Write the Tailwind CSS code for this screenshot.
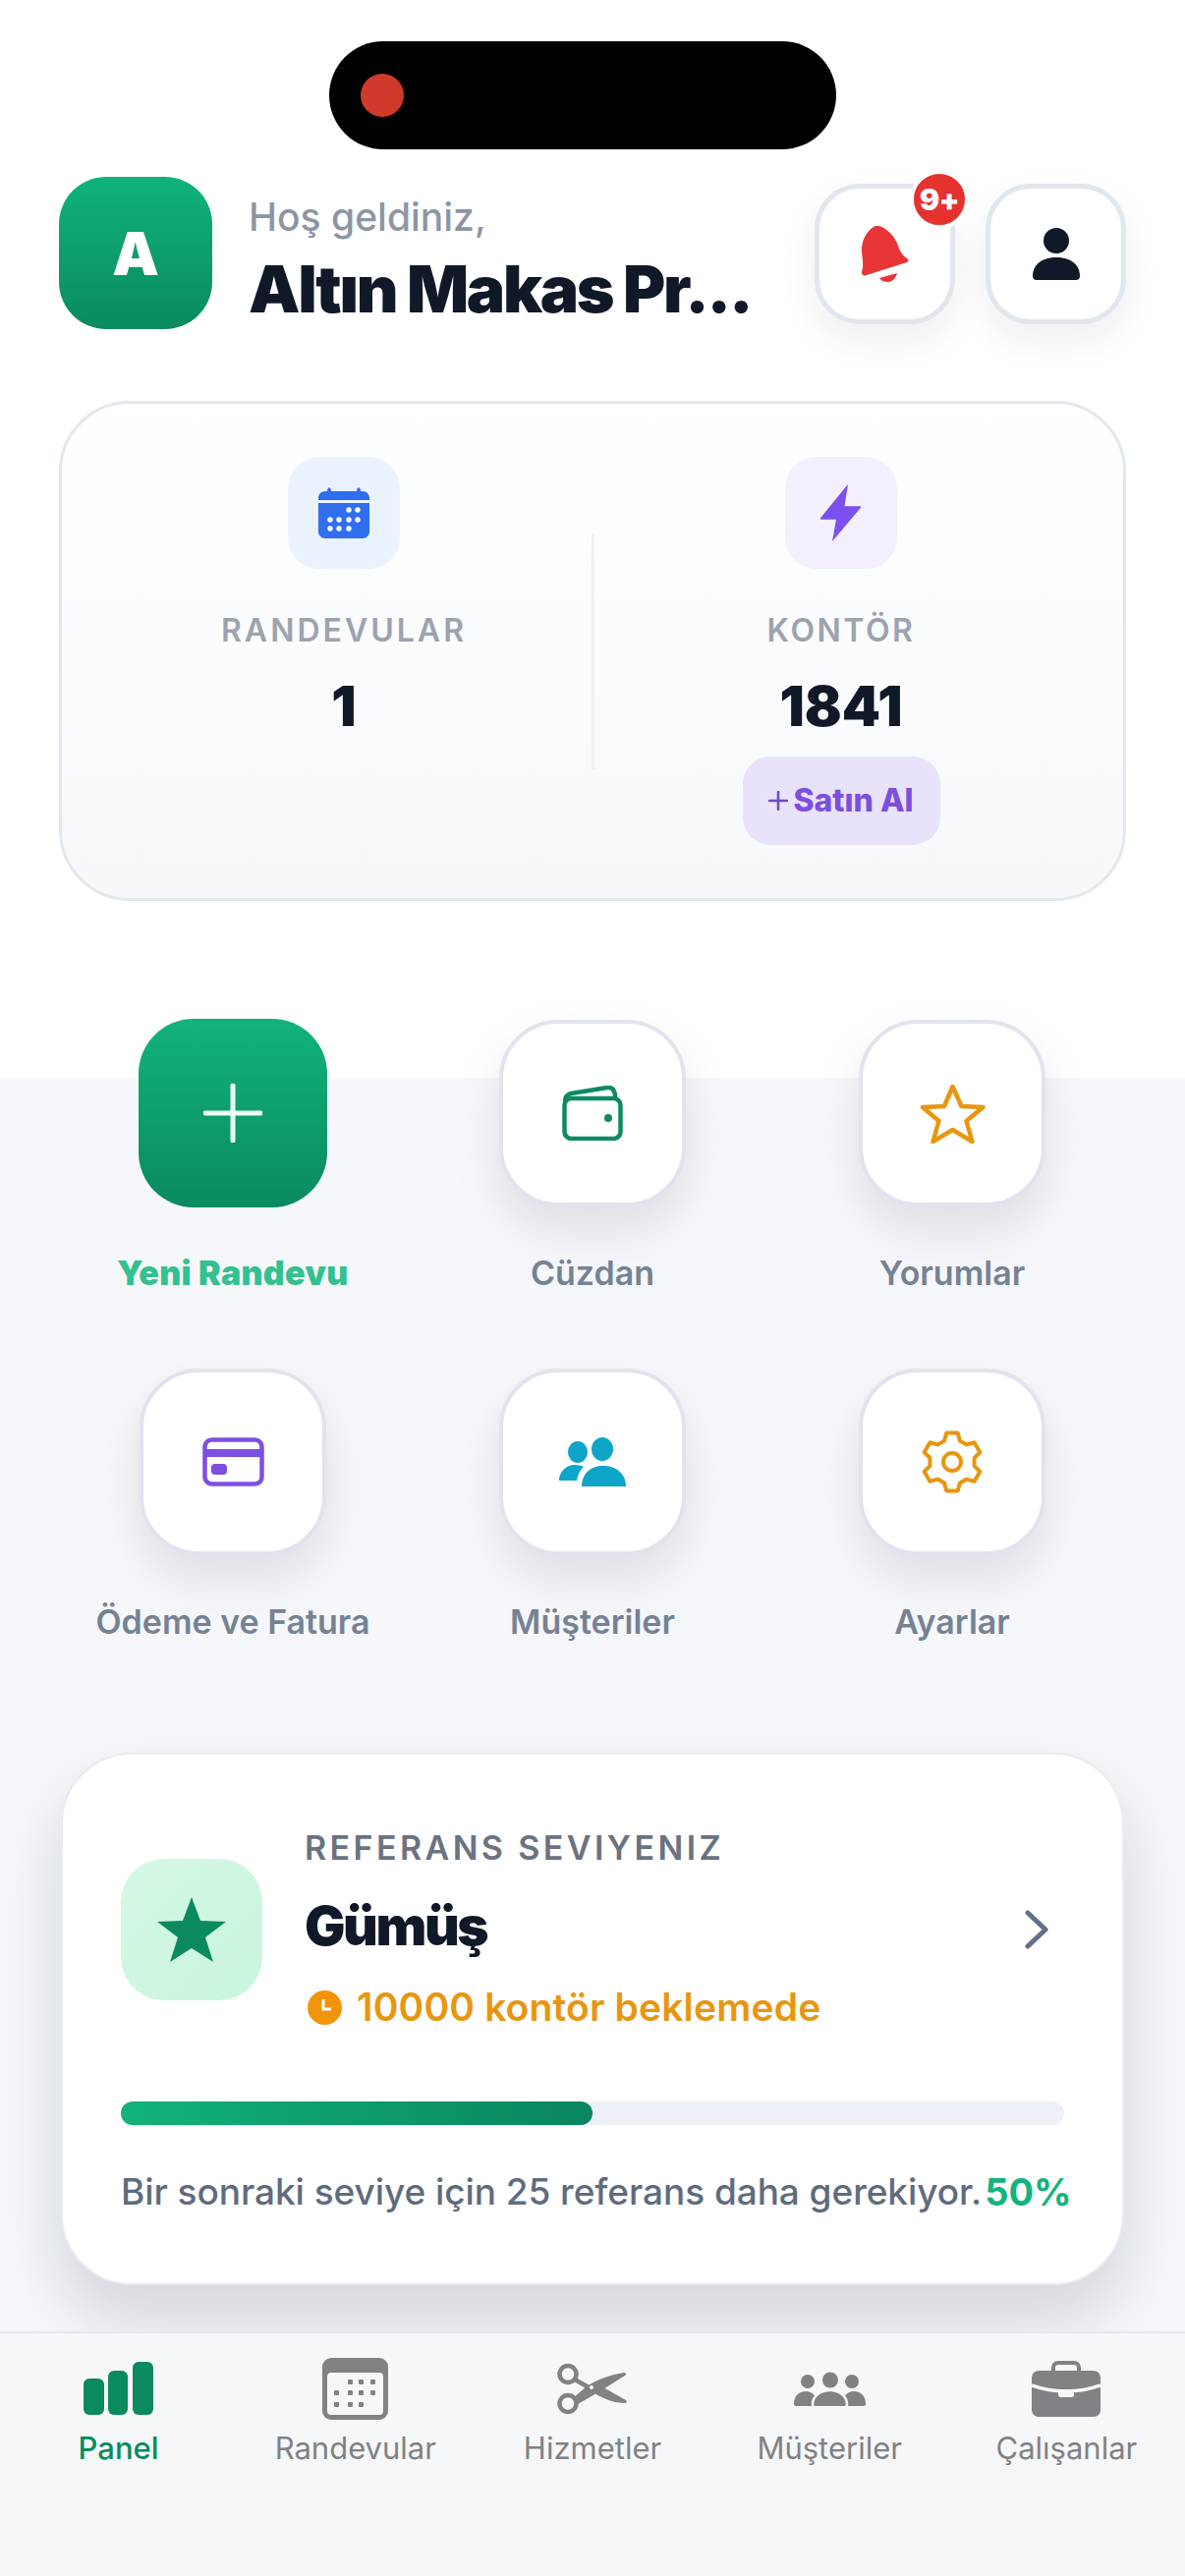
<!DOCTYPE html>
<html lang="en">
<head>
    <meta charset="UTF-8">
    <meta name="viewport" content="width=device-width, initial-scale=1.0">
    <title>Panel</title>
    <script src="https://cdn.jsdelivr.net/npm/@tailwindcss/browser@4"></script>
</head>
<body class="w-[1206px] h-[2622px] overflow-hidden flex flex-col bg-[linear-gradient(#ffffff_1097px,#f5f7fa_1097px)] font-['Inter',sans-serif] text-[#111827]">
    <!-- Status bar island -->
    <div class="h-[180px] shrink-0 pt-[42px] pr-[20px] flex justify-center">
        <div class="w-[516px] h-[110px] rounded-full bg-black flex items-center pl-[32px]">
            <div class="w-[44px] h-[44px] rounded-full bg-[#cf3a2b]"></div>
        </div>
    </div>

    <!-- Header -->
    <header class="h-[155px] shrink-0 px-[60px] flex items-start">
        <div class="w-[156px] h-[155px] rounded-[48px] bg-gradient-to-b from-[#10b37a] to-[#0a8a60] flex items-center justify-center text-white text-[60px] font-black">A</div>
        <div class="ml-[37px] w-[530px] pt-[16px]">
            <div class="text-[39px] leading-[50px] text-[#8d95a3] font-medium">Hoş geldiniz,</div>
            <div class="mt-[10px] text-[66px] leading-[76px] font-black tracking-[-2.3px] whitespace-nowrap">Altın Makas Pr...</div>
        </div>
        <div class="ml-auto mt-[7px] flex gap-[31px]">
            <button class="relative w-[143px] h-[143px] rounded-[46px] bg-white border-[5px] border-[#e2e6ee] flex items-center justify-center shadow-[0_16px_36px_rgba(15,23,42,0.07)]">
                <svg class="w-[48px] h-[57px]" viewBox="0 0 48 57"><path fill="#e93535" d="M12 1C15-1 20 0 24 3c7 5 11 11 13 17 2 7 5 10 9 13 2 1 2 3 0 4L5 50c-3 1-5 0-5-3 2-7 1-12 0-20C-1 17 4 6 12 1z"/><path fill="#e93535" d="M18 53l18-5c-1 5-5 9-9 9-4 0-7-1-9-4z"/></svg>
                <span class="absolute left-[92px] top-[-19px] w-[60px] h-[60px] rounded-full bg-[#e5322f] border-[4px] border-white flex items-center justify-center text-white text-[30px] font-black tracking-[-0.5px]">9+</span>
            </button>
            <button class="w-[143px] h-[143px] rounded-[46px] bg-white border-[5px] border-[#e2e6ee] flex items-center justify-center shadow-[0_16px_36px_rgba(15,23,42,0.07)]">
                <svg class="w-[48px] h-[53px]" viewBox="0 0 48 53"><circle cx="24" cy="13" r="13" fill="#111827"/><path fill="#111827" d="M0 49c0-12 10-19 24-19s24 7 24 19c0 2-1 4-4 4H4c-3 0-4-2-4-4z"/></svg>
            </button>
        </div>
    </header>

    <main class="px-[60px] pt-[73px] flex-1 flex flex-col">
        <!-- Stats card -->
        <section class="h-[509px] w-[1086px] shrink-0 rounded-[72px] border-[3px] border-[#e2e8ee] bg-gradient-to-b from-white to-[#f6f8fa] px-[34px] grid grid-cols-2 relative">
            <div class="absolute left-[539px] top-[132px] w-[3px] h-[240px] bg-[#eef1f5]"></div>
            <div class="flex flex-col items-center pt-[54px]">
                <div class="w-[114px] h-[114px] rounded-[32px] bg-[#eaf2fe] flex items-center justify-center">
                    <svg class="w-[52px] h-[52px]" viewBox="0 0 52 52"><path fill="#2f6fed" d="M9 4c0-5 4-5 4 0h26c0-5 4-5 4 0h2c4 0 7 3 7 7v2H0v-2c0-4 3-7 7-7h2z"/><path fill="#2f6fed" d="M0 16h52v29c0 4-3 7-7 7H7c-4 0-7-3-7-7V16z"/><g fill="#fff"><circle cx="31" cy="23" r="2.700"/><circle cx="40" cy="23" r="2.700"/><circle cx="12" cy="33" r="2.700"/><circle cx="21" cy="33" r="2.700"/><circle cx="31" cy="33" r="2.700"/><circle cx="40" cy="33" r="2.700"/><circle cx="12" cy="42" r="2.700"/><circle cx="21" cy="42" r="2.700"/><circle cx="31" cy="42" r="2.700"/></g></svg>
                </div>
                <div class="mt-[43px] text-[32px] leading-[40px] font-semibold tracking-[3px] text-[#9ca3af]">RANDEVULAR</div>
                <div class="mt-[27px] text-[56px] leading-[60px] font-black">1</div>
            </div>
            <div class="flex flex-col items-center pt-[54px]">
                <div class="w-[114px] h-[114px] rounded-[32px] bg-[#f3effd] flex items-center justify-center">
                    <svg class="w-[42px] h-[58px]" viewBox="0 0 42 56" preserveAspectRatio="none"><path fill="#7c4ff0" d="M28 0L0 33c-.500 1 0 1.500 1 1.500h15L12 56l29-33c.500-1 0-1.500-1-1.500H24.500L28 0z"/></svg>
                </div>
                <div class="mt-[43px] text-[32px] leading-[40px] font-semibold tracking-[2.500px] text-[#9ca3af]">KONTÖR</div>
                <div class="mt-[27px] text-[56px] leading-[60px] font-black">1841</div>
                <button class="mt-[21px] w-[201px] h-[90px] rounded-[28px] bg-[#e8e2fa] text-[#7c4fe0] text-[32px] font-extrabold flex items-center justify-center gap-[5px]">
                    <svg class="w-[20px] h-[20px]" viewBox="0 0 20 20"><path stroke="#6d4bc0" stroke-width="2.500" stroke-linecap="round" d="M10 1v18M1 10h18"/></svg>
                    <span>Satın Al</span>
                </button>
            </div>
        </section>

        <!-- Quick actions -->
        <section class="mt-[120px] grid grid-cols-3 w-[1098px] -ml-[6px]">
            <a class="h-[356px] flex flex-col items-center">
                <div class="w-[192px] h-[192px] rounded-[56px] bg-gradient-to-b from-[#12b37a] to-[#0a8a60] flex items-center justify-center">
                    <svg class="w-[60px] h-[60px]" viewBox="0 0 60 60"><path stroke="#eafff6" stroke-width="5" stroke-linecap="round" d="M30 2v56M2 30h56"/></svg>
                </div>
                <div class="mt-[47px] text-[34px] leading-[40px] font-black tracking-[0.3px] text-[#34c08f]">Yeni Randevu</div>
            </a>
            <a class="h-[356px] flex flex-col items-center pt-[1px]">
                <div class="w-[190px] h-[190px] rounded-[60px] bg-white border-[4px] border-[#e1e4ee] flex items-center justify-center shadow-[0_24px_50px_rgba(15,23,42,0.10)]">
                    <svg class="w-[62px] h-[56px]" viewBox="0 0 62 56" fill="none" stroke="#0e8a63" stroke-width="4.500" stroke-linejoin="round"><rect x="2.500" y="13" width="57" height="41" rx="7"/><path d="M3 17c0-5 2-8 6-9l37-6c4-.500 7 2 8 7v4"/><circle cx="47" cy="33" r="4" fill="#0e8a63" stroke="none"/></svg>
                </div>
                <div class="mt-[48px] text-[34px] leading-[40px] font-semibold text-[#768294]">Cüzdan</div>
            </a>
            <a class="h-[356px] flex flex-col items-center pt-[1px]">
                <div class="w-[190px] h-[190px] rounded-[60px] bg-white border-[4px] border-[#e1e4ee] flex items-center justify-center shadow-[0_24px_50px_rgba(15,23,42,0.10)]">
                    <svg class="w-[67px] h-[62px]" viewBox="0 0 67 62" fill="none" stroke="#e8960f" stroke-width="4.500" stroke-linejoin="round"><path d="M33.500 4l9 20 22 1-17 14 6 21-20-12-20 12 6-21L3 25l22-1z"/></svg>
                </div>
                <div class="mt-[48px] text-[34px] leading-[40px] font-semibold text-[#768294]">Yorumlar</div>
            </a>
            <a class="h-[356px] flex flex-col items-center">
                <div class="w-[190px] h-[190px] rounded-[60px] bg-white border-[4px] border-[#e1e4ee] flex items-center justify-center shadow-[0_24px_50px_rgba(15,23,42,0.10)]">
                    <svg class="w-[63px] h-[50px]" viewBox="0 0 63 50" fill="none"><rect x="2.500" y="2.500" width="58" height="45" rx="7" stroke="#7c4fe0" stroke-width="4.500"/><path fill="#7c4fe0" d="M2 12h59v8H2z"/><rect x="9" y="27" width="16" height="11" rx="4" fill="#7c4fe0"/></svg>
                </div>
                <div class="mt-[48px] text-[34px] leading-[40px] font-semibold text-[#768294]">Ödeme ve Fatura</div>
            </a>
            <a class="h-[356px] flex flex-col items-center">
                <div class="w-[190px] h-[190px] rounded-[60px] bg-white border-[4px] border-[#e1e4ee] flex items-center justify-center shadow-[0_24px_50px_rgba(15,23,42,0.10)]">
                    <svg class="w-[68px] h-[50px]" viewBox="0 0 68 50" fill="#0ea5c9"><ellipse cx="19" cy="15" rx="10" ry="11"/><ellipse cx="44" cy="12" rx="11" ry="12"/><path d="M0 44c0-9 7-16 16-16 4 0 7 1 9 2-4 4-6 8-7 14H0z"/><path d="M23 50c0-13 9-21 22-21s23 8 23 21H23z"/></svg>
                </div>
                <div class="mt-[48px] text-[34px] leading-[40px] font-semibold text-[#768294]">Müşteriler</div>
            </a>
            <a class="h-[356px] flex flex-col items-center">
                <div class="w-[190px] h-[190px] rounded-[60px] bg-white border-[4px] border-[#e1e4ee] flex items-center justify-center shadow-[0_24px_50px_rgba(15,23,42,0.10)]">
                    <svg class="w-[64px] h-[64px]" viewBox="0 0 64 64" fill="none" stroke="#e8960f" stroke-width="4" stroke-linejoin="round"><path d="M24.100 10.400L26.300 2.500H37.700L39.900 10.400L46.800 14.400L54.600 12.300L60.400 22.200L54.600 28V36L60.400 41.800L54.600 51.700L46.800 49.600L39.900 53.600L37.700 61.500H26.300L24.100 53.600L17.200 49.600L9.400 51.700L3.600 41.800L9.400 36V28L3.600 22.200L9.400 12.300L17.200 14.400z"/><circle cx="32" cy="32" r="9"/></svg>
                </div>
                <div class="mt-[48px] text-[34px] leading-[40px] font-semibold text-[#768294]">Ayarlar</div>
            </a>
        </section>

        <!-- Referral card -->
        <section class="mt-[35px] w-[1082px] h-[542px] ml-[2px] shrink-0 rounded-[72px] bg-white border-[2px] border-[#e8ebf0] shadow-[0_36px_70px_rgba(15,23,42,0.15)] pl-[59px] pr-[58px] pt-[75px]">
            <div class="flex items-center">
                <div class="w-[144px] h-[144px] rounded-[44px] bg-gradient-to-br from-[#d6f8e6] to-[#c8f5dd] flex items-center justify-center shrink-0">
                    <svg class="w-[70px] h-[66px]" viewBox="0 0 70 66"><path fill="#0b8a5f" d="M35 0l9 24 26 1-21 16 8 25-22-14-22 14 8-25L0 25l26-1z"/></svg>
                </div>
                <div class="ml-[43px] flex-1">
                    <div class="text-[34px] leading-[40px] font-semibold tracking-[3.400px] text-[#6b7280]">REFERANS SEVIYENIZ</div>
                    <div class="mt-[27px] text-[55px] leading-[64px] font-black tracking-[-2.400px]">Gümüş</div>
                    <div class="mt-[28px] ml-[3px] flex items-center gap-[15px]">
                        <svg class="w-[35px] h-[35px]" viewBox="0 0 35 35"><circle cx="17.500" cy="17.500" r="17.500" fill="#f2940a"/><path fill="none" stroke="#fff" stroke-width="3" d="M16 9v10h8"/></svg>
                        <span class="text-[39px] leading-[46px] font-semibold tracking-[0.15px] text-[#e8960f]">10000 kontör beklemede</span>
                    </div>
                </div>
                <svg class="w-[24px] h-[40px] mr-[17px]" viewBox="0 0 24 40" fill="none"><path stroke="#64708a" stroke-width="5" stroke-linecap="round" stroke-linejoin="round" d="M3 3l18 17L3 37"/></svg>
            </div>
            <div class="mt-[73px] w-[960px] h-[24px] rounded-full bg-[#edf1f7]">
                <div class="h-full w-[480px] rounded-full bg-gradient-to-r from-[#12b37a] to-[#0a8560]"></div>
            </div>
            <div class="mt-[45px] flex items-center gap-[3px] whitespace-nowrap">
                <span class="text-[37px] leading-[46px] font-medium tracking-[-0.06px] text-[#5f6b7e]">Bir sonraki seviye için 25 referans daha gerekiyor.</span>
                <span class="text-[38px] leading-[46px] font-bold text-[#14b37d]">50%</span>
            </div>
        </section>
    </main>

    <!-- Bottom navigation -->
    <nav class="h-[249px] shrink-0 bg-[#f6f7f9] border-t-[2px] border-[#e4e6ea] grid grid-cols-5 items-start pt-[24px] relative text-[31px] leading-[40px] text-[#808285]">
        <a class="flex flex-col items-center">
            <div class="h-[64px] flex items-center">
                <svg class="w-[71px] h-[54px]" viewBox="0 0 71 54" fill="#0b8a5f"><rect y="17" width="21" height="37" rx="6"/><rect x="25" y="9" width="20" height="45" rx="6"/><rect x="50" width="21" height="54" rx="6"/></svg>
            </div>
            <span class="mt-[9px] font-medium text-[#0b8a5f]">Panel</span>
        </a>
        <a class="flex flex-col items-center">
            <div class="h-[64px] flex items-center">
                <svg class="w-[67px] h-[63px]" viewBox="0 0 67 63"><rect width="67" height="63" rx="9" fill="#808285"/><rect x="5" y="15" width="57" height="43" rx="4" fill="#f6f7f9"/><g fill="#808285"><rect x="26" y="22" width="5" height="5" rx="1"/><rect x="37" y="22" width="5" height="5" rx="1"/><rect x="49" y="22" width="5" height="5" rx="1"/><rect x="12" y="33" width="5" height="5" rx="1"/><rect x="26" y="33" width="5" height="5" rx="1"/><rect x="37" y="33" width="5" height="5" rx="1"/><rect x="49" y="33" width="5" height="5" rx="1"/><rect x="12" y="45" width="5" height="5" rx="1"/><rect x="26" y="45" width="5" height="5" rx="1"/><rect x="37" y="45" width="5" height="5" rx="1"/></g></svg>
            </div>
            <span class="mt-[9px]">Randevular</span>
        </a>
        <a class="flex flex-col items-center">
            <div class="h-[64px] flex items-center">
                <svg class="w-[71px] h-[53px]" viewBox="0 0 71 53"><g fill="none" stroke="#808285" stroke-width="4.500"><circle cx="11" cy="11.500" r="8.500"/><circle cx="11" cy="41.500" r="8.500"/><path d="M18 17l14 8"/></g><path fill="#808285" d="M16 36L30 24C40 17 55 12 68 10c2 0 3 2 1 3L42 30 21 42z"/><path fill="#808285" d="M38 31l9-6 23 13c1 1 1 3-1 3-11 0-21-4-31-10z"/><circle cx="35" cy="25" r="2" fill="#f6f7f9"/></svg>
            </div>
            <span class="mt-[9px]">Hizmetler</span>
        </a>
        <a class="flex flex-col items-center">
            <div class="h-[64px] flex items-center">
                <svg class="w-[73px] h-[35px]" viewBox="0 0 73 35" fill="#808285"><circle cx="14" cy="10" r="7"/><circle cx="59" cy="10" r="7"/><circle cx="37" cy="8.500" r="8"/><path d="M0 33c0-8 5-13 12-13s11 5 11 13c0 1-1 2-2 2H2c-1 0-2-1-2-2z"/><path d="M73 33c0-8-5-13-12-13s-11 5-11 13c0 1 1 2 2 2h19c1 0 2-1 2-2z"/><path stroke="#f6f7f9" stroke-width="2.500" d="M19 33c0-8 8-14 17.500-14S54 25 54 33c0 2-1 3.500-3 3.500H22c-2 0-3-1.500-3-3.500z"/></svg>
            </div>
            <span class="mt-[9px]">Müşteriler</span>
        </a>
        <a class="flex flex-col items-center">
            <div class="h-[64px] flex items-center">
                <svg class="w-[70px] h-[57px]" viewBox="0 0 70 57"><path fill="none" stroke="#808285" stroke-width="4" d="M22 12V7c0-3 2-5 5-5h16c3 0 5 2 5 5v5"/><rect y="10" width="70" height="47" rx="7" fill="#808285"/><path fill="none" stroke="#f6f7f9" stroke-width="3.500" d="M0 25c11 4 23 6 35 6s24-2 35-6"/><rect x="27" y="29" width="16" height="8" rx="2.500" fill="#f6f7f9"/></svg>
            </div>
            <span class="mt-[9px]">Çalışanlar</span>
        </a>
    </nav>
</body>
</html>
